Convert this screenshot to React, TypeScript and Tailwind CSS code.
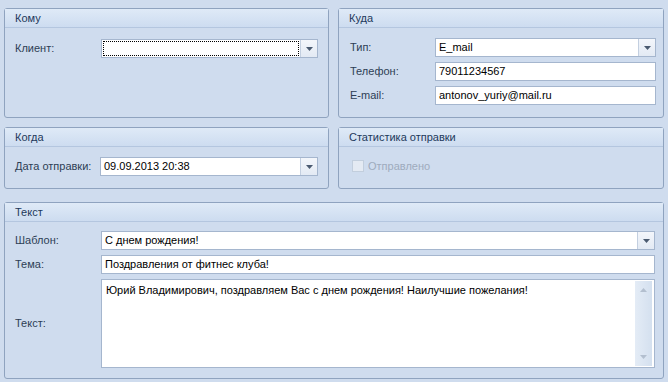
const font = { fontFamily: '"Liberation Sans", Arial, sans-serif' };

const Arrow = ({ up = false, color = "#4a5a70" }: { up?: boolean; color?: string }) => (
  <svg width="7" height="4" viewBox="0 0 7 4" className={up ? "rotate-180" : ""}>
    <path d="M0 0h7L3.5 4z" fill={color} />
  </svg>
);

const Panel = ({ title, className = "", children }: { title: string; className?: string; children: React.ReactNode }) => (
  <div className={`flex flex-col rounded-[3px] border border-[#8fa3bf] bg-[#cfdcee] ${className}`}>
    <div className="flex h-[19px] shrink-0 items-center border-b border-[#b4c6df] bg-gradient-to-b from-[#dfeaf7] to-[#cddcf0] pl-[10px] text-[#1e395b]">
      {title}
    </div>
    {children}
  </div>
);

const Combo = ({ value = "", focused = false, className = "" }: { value?: string; focused?: boolean; className?: string }) => (
  <div className={`flex h-[19px] border border-[#a5b6ce] bg-white ${className}`}>
    <div className="flex flex-1 items-center p-[1px]">
      <div
        className={`flex h-full w-full items-center pl-[2px] text-black ${focused ? "border border-dotted border-black" : ""}`}
      >
        {value}
      </div>
    </div>
    <div className="flex w-[17px] items-center justify-center border-l border-[#c3cfe0] bg-gradient-to-b from-[#f3f6fb] to-[#e3eaf4]">
      <Arrow />
    </div>
  </div>
);

const Input = ({ value, className = "" }: { value: string; className?: string }) => (
  <div className={`flex h-[19px] items-center border border-[#a5b6ce] bg-white pl-[3px] text-black ${className}`}>{value}</div>
);

const Label = ({ children, className = "" }: { children: React.ReactNode; className?: string }) => (
  <div className={`text-[#2d3e55] ${className}`}>{children}</div>
);

export default function App() {
  return (
    <div className="h-[382px] w-[668px] overflow-hidden bg-[#cfdcee] px-[4px] pt-[8px] text-[11px] leading-none" style={font}>
      {/* Кому / Куда */}
      <div className="flex gap-[9px]">
        <Panel title="Кому" className="h-[110px] w-[325px]">
          <div className="flex items-center pl-[10px] pr-[10px] pt-[11px]">
            <Label className="w-[86px]">Клиент:</Label>
            <Combo focused className="flex-1" />
          </div>
        </Panel>
        <Panel title="Куда" className="h-[110px] w-[326px]">
          <div className="flex flex-col gap-[5px] pl-[11px] pr-[7px] pt-[10px]">
            <div className="flex items-center">
              <Label className="w-[85px]">Тип:</Label>
              <Combo value="E_mail" className="flex-1" />
            </div>
            <div className="flex items-center">
              <Label className="w-[85px]">Телефон:</Label>
              <Input value="79011234567" className="flex-1" />
            </div>
            <div className="flex items-center">
              <Label className="w-[85px]">E-mail:</Label>
              <Input value="antonov_yuriy@mail.ru" className="flex-1" />
            </div>
          </div>
        </Panel>
      </div>

      {/* Когда / Статистика */}
      <div className="mt-[9px] flex gap-[9px]">
        <Panel title="Когда" className="h-[62px] w-[325px]">
          <div className="flex items-center pl-[10px] pr-[10px] pt-[10px]">
            <Label className="w-[85px]">Дата отправки:</Label>
            <Combo value="09.09.2013 20:38" className="flex-1" />
          </div>
        </Panel>
        <Panel title="Статистика отправки" className="h-[62px] w-[326px]">
          <div className="flex items-center gap-[4px] pl-[13px] pt-[13px] text-[#9eabbd]">
            <div className="h-[12px] w-[12px] border border-[#c2cedd] bg-[#e4eaf3]" />
            <span>Отправлено</span>
          </div>
        </Panel>
      </div>

      {/* Текст */}
      <Panel title="Текст" className="mt-[13px] h-[177px] w-[660px]">
        <div className="flex flex-col gap-[5px] pl-[10px] pr-[8px] pt-[9px]">
          <div className="flex items-center">
            <Label className="w-[86px]">Шаблон:</Label>
            <Combo value="С днем рождения!" className="flex-1" />
          </div>
          <div className="flex items-center">
            <Label className="w-[86px]">Тема:</Label>
            <Input value="Поздравления от фитнес клуба!" className="flex-1" />
          </div>
          <div className="flex items-center">
            <Label className="w-[86px]">Текст:</Label>
            <div className="flex h-[89px] flex-1 border border-[#a5b6ce] bg-white">
              <div className="flex-1 pl-[4px] pt-[5px] text-black">
                Юрий Владимирович, поздравляем Вас с днем рождения! Наилучшие пожелания!
              </div>
              <div className="my-[1px] mr-[2px] flex w-[17px] flex-col items-center justify-between bg-gradient-to-r from-[#e4ecf6] to-[#d4e0ef] py-[7px]">
                <Arrow up color="#b3bfcf" />
                <Arrow color="#b3bfcf" />
              </div>
            </div>
          </div>
        </div>
      </Panel>
    </div>
  );
}
